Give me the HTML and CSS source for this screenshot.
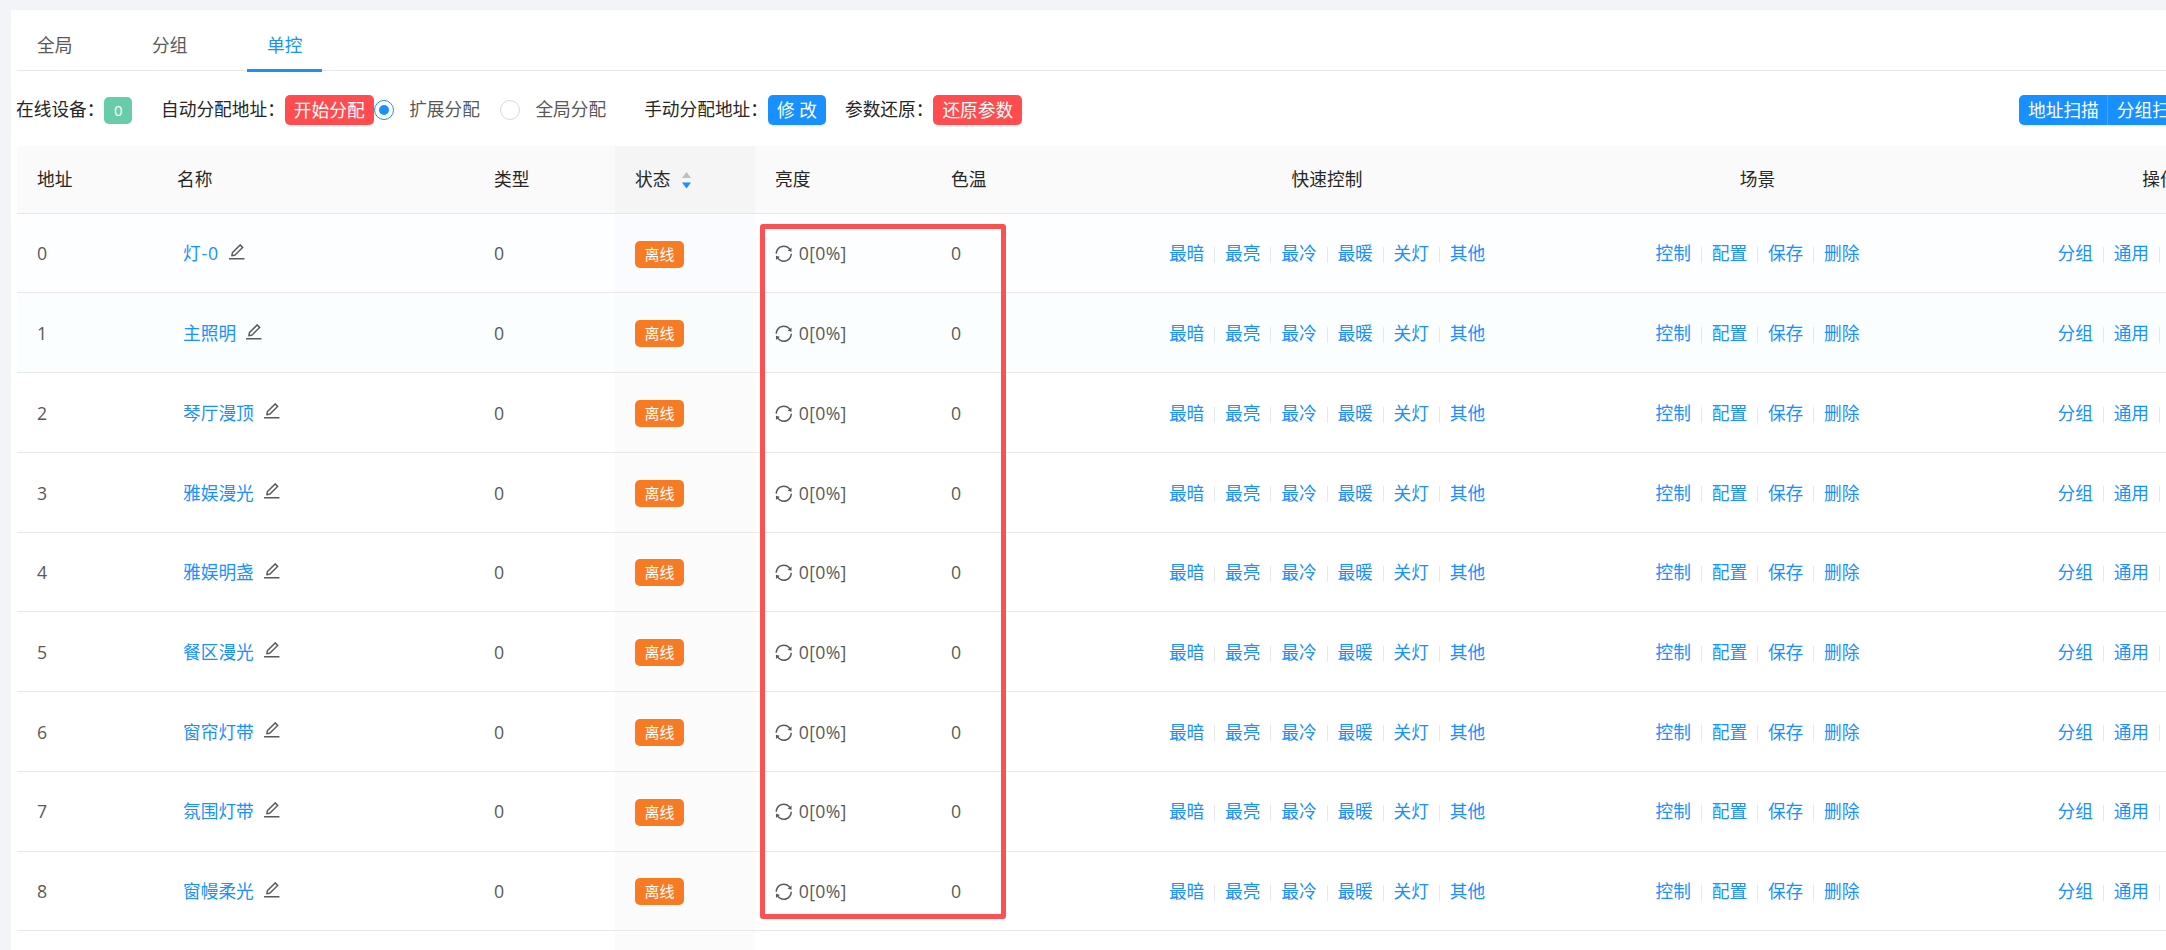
FILE: index.html
```
<!DOCTYPE html>
<html lang="zh-CN">
<head>
    <meta charset="UTF-8">
    <title>单控</title>
    <link rel="stylesheet" href="styles.css">
</head>
<body>
    <svg class="sprite">
        <symbol id="icon-edit" viewBox="64 64 896 896">
            <path d="M257.7 752c2 0 4-.2 6-.5L431.9 722c2-.4 3.9-1.3 5.3-2.8l423.9-423.9a9.96 9.96 0 000-14.1L694.9 114.9c-1.9-1.9-4.4-2.9-7.1-2.9s-5.2 1-7.1 2.9L256.8 538.8c-1.5 1.5-2.4 3.3-2.8 5.3l-29.5 168.2a33.5 33.5 0 009.4 29.8c6.6 6.4 14.9 9.9 23.8 9.9zm67.4-174.4L687.8 215l73.3 73.3-362.7 362.6-88.9 15.7 15.6-89zM880 836H144c-17.7 0-32 14.3-32 32v36c0 4.4 3.6 8 8 8h784c4.4 0 8-3.6 8-8v-36c0-17.7-14.3-32-32-32z"/>
        </symbol>
        <symbol id="icon-sync" viewBox="64 64 896 896">
            <path d="M168 504.2c1-43.7 10-86.1 26.9-126 17.3-41 42.1-77.7 73.7-109.4S337 212.3 378 195c42.4-17.9 87.4-27 133.9-27s91.5 9.1 133.8 27A341.5 341.5 0 01755 268.8c9.9 9.9 19.2 20.4 27.8 31.4l-60.2 47a8 8 0 003 14.1l175.7 43c5 1.2 9.9-2.6 9.9-7.7l.8-180.9c0-6.7-7.7-10.5-12.9-6.3l-56.4 44.1C765.8 155.1 646.2 92 511.8 92 282.7 92 96.3 275.6 92 503.8a8 8 0 008 8.2h60c4.4 0 7.9-3.5 8-7.8zm756 7.8h-60c-4.4 0-7.9 3.5-8 7.8-1 43.7-10 86.1-26.9 126-17.3 41-42.1 77.8-73.7 109.4A342.45 342.45 0 01512.1 856a342.24 342.24 0 01-243.2-100.8c-9.9-9.9-19.2-20.4-27.8-31.4l60.2-47a8 8 0 00-3-14.1l-175.7-43c-5-1.2-9.9 2.6-9.9 7.7l-.7 181c0 6.7 7.7 10.5 12.9 6.3l56.4-44.1C258.2 868.9 377.8 932 512.2 932c229.2 0 415.5-183.7 419.8-411.8a8 8 0 00-8-8.2z"/>
        </symbol>
    </svg>

    <div class="card">
        <div class="tabs">
            <div class="tab">全局</div>
            <div class="tab">分组</div>
            <div class="tab active">单控</div>
        </div>

        <div class="toolbar">
            <span class="label">在线设备：</span>
            <span class="tag tag-green">0</span>

            <span class="label group">自动分配地址：</span>
            <button class="btn btn-danger">开始分配</button>
            <label class="radio checked"><i></i>扩展分配</label>
            <label class="radio"><i></i>全局分配</label>

            <span class="label group-lg">手动分配地址：</span>
            <button class="btn btn-primary">修 改</button>

            <span class="label group-sm">参数还原：</span>
            <button class="btn btn-danger">还原参数</button>

            <div class="btn-group">
                <button class="btn btn-primary">地址扫描</button>
                <button class="btn btn-primary">分组扫描</button>
            </div>
        </div>

        <div class="table">
            <div class="row head">
                <div class="cell">地址</div>
                <div class="cell">名称</div>
                <div class="cell">类型</div>
                <div class="cell sorted">状态
                    <svg class="sorter" viewBox="0 0 9 17">
                        <path fill="#bfbfbf" d="M4.5 0L9 6H0z"/>
                        <path fill="#1890ff" d="M0 10.5h9l-4.5 6z"/>
                    </svg>
                </div>
                <div class="cell">亮度</div>
                <div class="cell">色温</div>
                <div class="cell center">快速控制</div>
                <div class="cell center">场景</div>
                <div class="cell center">操作</div>
            </div>
            <div id="rows"></div>
            <div class="row">
                <div class="cell"></div>
                <div class="cell"></div>
                <div class="cell"></div>
                <div class="cell sorted"></div>
            </div>
        </div>

        <div class="highlight"></div>
    </div>

    <script>
        const names = ['灯-0', '主照明', '琴厅漫顶', '雅娱漫光', '雅娱明盏', '餐区漫光', '窗帘灯带', '氛围灯带', '窗幔柔光'];
        const links = items => items.map(t => `<a>${t}</a>`).join('<i class="divider"></i>');

        document.getElementById('rows').innerHTML = names.map((name, i) => `
            <div class="row">
                <div class="cell">${i}</div>
                <div class="cell name"><a>${name}</a><svg class="icon edit"><use href="#icon-edit"/></svg></div>
                <div class="cell">0</div>
                <div class="cell sorted"><span class="tag tag-orange">离线</span></div>
                <div class="cell level"><svg class="icon sync"><use href="#icon-sync"/></svg>0[0%]</div>
                <div class="cell">0</div>
                <div class="cell center">${links(['最暗', '最亮', '最冷', '最暖', '关灯', '其他'])}</div>
                <div class="cell center">${links(['控制', '配置', '保存', '删除'])}</div>
                <div class="cell actions">${links(['分组', '通用', ''])}</div>
            </div>`).join('');
    </script>
</body>
</html>
```
FILE: styles.css
```
* {
    box-sizing: border-box;
}
body {
    margin: 0;
    padding: 10px 0 0 11px;
    height: 950px;
    overflow: hidden;
    background: #f3f4f7;
    font-family: "Open Sans", "Noto Sans CJK SC", sans-serif;
    font-size: 17.7px;
    line-height: 27.5px;
    color: #595959;
}
.sprite {
    display: none;
}
.card {
    position: relative;
    height: 940px;
    padding: 4px 0 0 6px;
    background: #fff;
    overflow: hidden;
}

/* tabs */
.tabs {
    display: flex;
    gap: 40px;
    height: 57px;
    border-bottom: 1px solid #e8e8e8;
}
.tab {
    width: 75px;
    height: 58px;
    padding: 18px 0 0 20px;
}
.tab.active {
    color: #1890ff;
    border-bottom: 3px solid #1890ff;
}

/* toolbar */
.toolbar {
    display: flex;
    align-items: center;
    height: 75px;
    padding-top: 2px;
    white-space: nowrap;
}
.label {
    margin-left: -1px;
    color: #262626;
}
.label.group {
    margin-left: 29px;
}
.label.group-lg {
    margin-left: 38px;
}
.label.group-sm {
    margin-left: 19px;
}
.btn {
    height: 30px;
    padding: 0 9px;
    border: none;
    border-radius: 5px;
    font: inherit;
    line-height: 30px;
    color: #fff;
    box-shadow: 0 2px 0 rgba(0, 0, 0, 0.04);
}
.btn-primary {
    background: #1890ff;
}
.btn-danger {
    background: #ff4d4f;
}
.btn-group {
    display: flex;
    position: absolute;
    left: 2008px;
}
.btn-group .btn:first-child {
    padding-right: 8px;
    border-radius: 5px 0 0 5px;
    border-right: 1px solid #40a9ff;
}
.btn-group .btn:last-child {
    border-radius: 0 5px 5px 0;
}
.radio {
    display: flex;
    align-items: center;
    margin-right: 20px;
}
.radio + .radio {
    margin-right: 0;
}
.radio i {
    display: flex;
    align-items: center;
    justify-content: center;
    width: 20px;
    height: 20px;
    margin-right: 15.5px;
    border: 1px solid #d9d9d9;
    border-radius: 50%;
}
.radio.checked i {
    border-color: #1890ff;
}
.radio.checked i::after {
    content: "";
    width: 10px;
    height: 10px;
    border-radius: 50%;
    background: #1890ff;
}
.tag {
    height: 27px;
    padding: 0 9.5px;
    border-radius: 5px;
    font-size: 15px;
    line-height: 27px;
    color: #fff;
}
.tag-green {
    margin-top: 1px;
    background: #67cda9;
}
.tag-orange {
    background: #f77b22;
}

/* table */
.table {
    width: 2335px;
}
.row {
    display: grid;
    grid-template-columns: 140px 317px 141px 140px 176px 176px 440px 421px 384px;
    height: 79.74px;
}
.row.head {
    height: 67.7px;
    background: #fafafa;
    color: #262626;
    border-radius: 4px 0 0 0;
}
.cell {
    display: flex;
    align-items: center;
    padding: 2px 20px 0;
    border-bottom: 1px solid #e8e8e8;
    white-space: nowrap;
}
.head .cell {
    padding-top: 0;
}
.cell.center {
    justify-content: center;
    padding-left: 0;
    padding-right: 0;
}
.cell.name {
    padding-left: 26px;
}
.cell.level {
    letter-spacing: 0.3px;
}
.cell.actions {
    padding-left: 89.5px;
}
.sorted {
    background: #fbfbfb;
}
.head .sorted {
    background: #f5f5f5;
}
#rows .row:nth-child(1) {
    background: #fcfeff;
}
#rows .row:nth-child(1) .sorted {
    background: #fafbfe;
}
#rows .row:nth-child(2) {
    background: #fafeff;
}
#rows .row:nth-child(2) .sorted {
    background: #f8fcfd;
}
.cell a {
    color: #1890ff;
    text-decoration: none;
}
#rows .row:first-child .name a {
    letter-spacing: 0.8px;
}
.divider {
    width: 1px;
    height: 16px;
    margin: 2px 9.9px 0;
    background: #e8e8e8;
}
.icon {
    width: 17.5px;
    height: 17.5px;
    fill: #595959;
}
.edit {
    margin: -5px 0 0 9px;
}
.sync {
    margin-right: 6.25px;
}
.sorter {
    width: 9px;
    height: 17px;
    margin: 3px 0 0 12px;
}

/* red frame over the brightness and colour temperature columns */
.highlight {
    position: absolute;
    left: 749px;
    top: 213.5px;
    width: 246px;
    height: 695px;
    border: 5px solid #fa5252;
    border-radius: 3px;
}
```
